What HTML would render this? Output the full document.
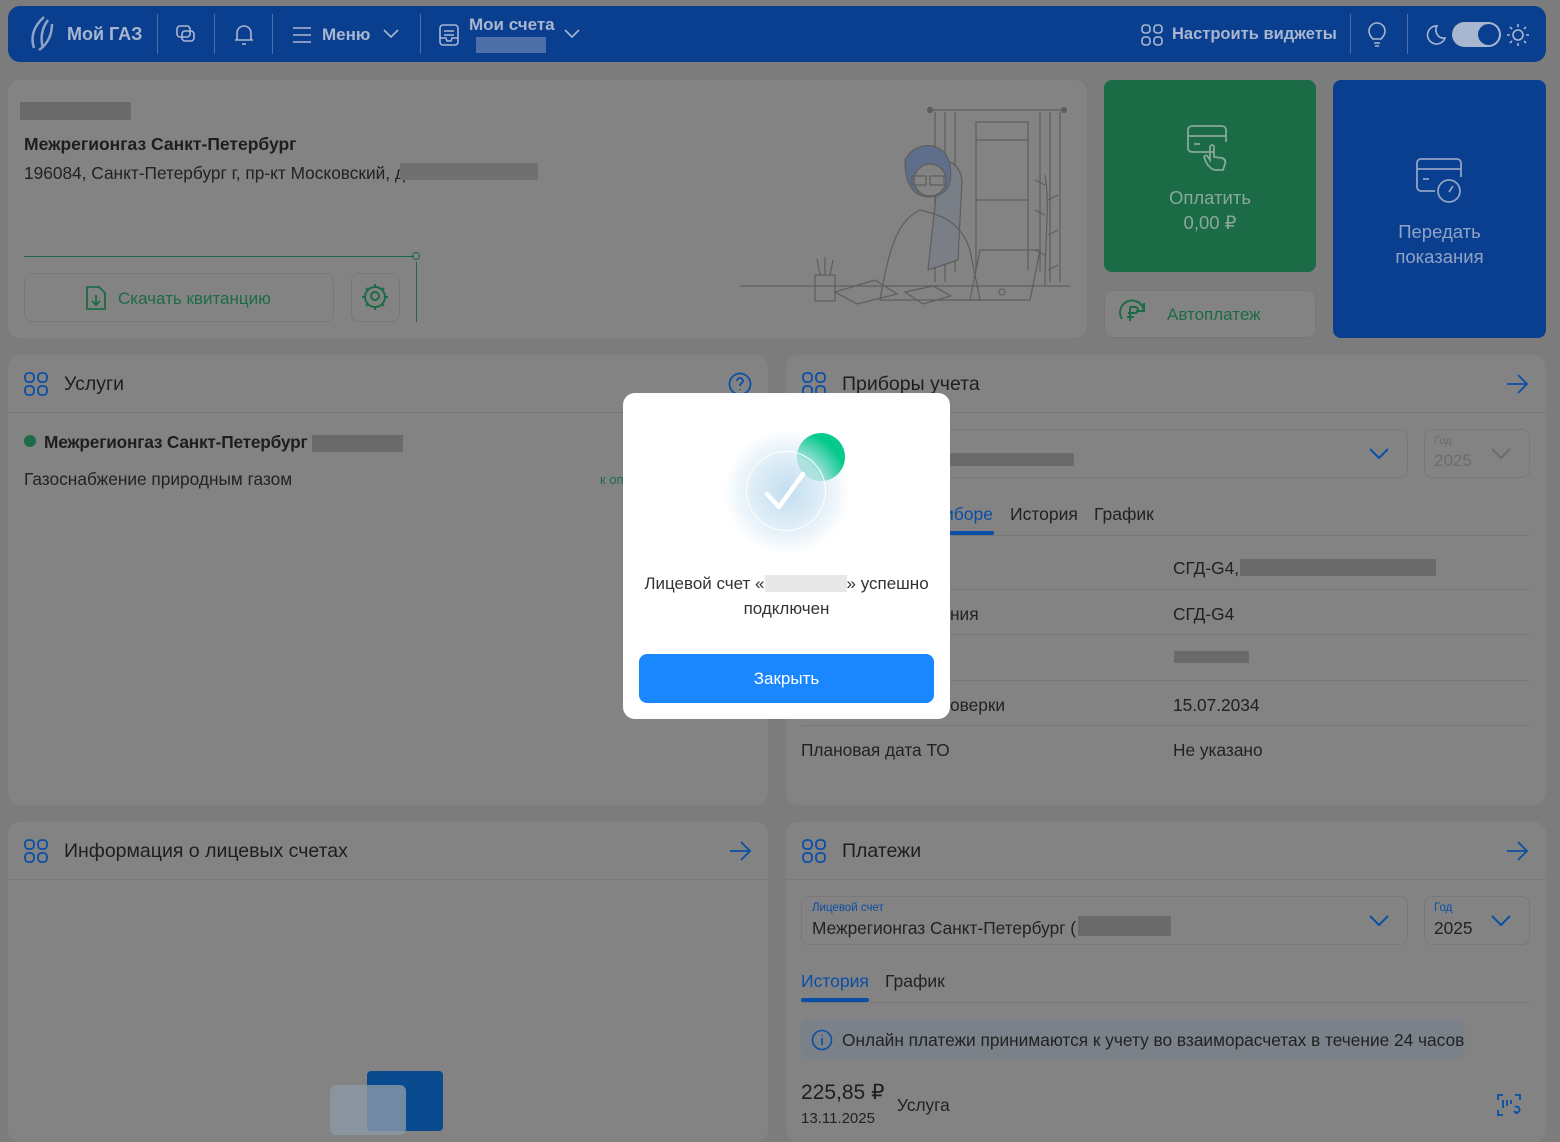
<!DOCTYPE html>
<html><head><meta charset="utf-8"><style>
*{box-sizing:border-box;margin:0;padding:0}
body{width:1560px;height:1123px;overflow:hidden;background:#7c7c7c;font-family:"Liberation Sans","Noto Sans CJK SC",sans-serif;color:#1e1e1e;position:relative}
.a{position:absolute}
.card{position:absolute;background:#838383;border-radius:12px}
.hd{position:absolute;left:0;right:0;top:0;height:58px;border-bottom:1px solid #787878}
.hd .t{position:absolute;left:56px;top:18px;font-size:19.5px;color:#1e1e1e}
.blur{position:absolute;background:#6a6a6a}
.blu{color:#0b4ea6}
.row{position:absolute;left:16px;right:16px;height:1px;background:#777}
.sel{position:absolute;border:1px solid #787878;border-radius:8px}
.txt{position:absolute;font-size:17.3px;color:#222}
</style></head><body>

<!-- header -->
<div class="a" style="left:8px;top:6px;width:1538px;height:56px;background:#0a3f8f;border-radius:12px"></div>
<svg class="a" style="left:24px;top:14px" width="36" height="40" viewBox="0 0 36 40"><path d="M20 3C10 12 6 22 10 34M24 6C18 14 16 24 19 34M28 10C28 20 24 30 15 36" stroke="#8fa3c6" stroke-width="2.5" fill="none"/></svg>
<div class="a" style="left:67px;top:24px;font-size:18px;font-weight:bold;color:#a9b6cf">Мой ГАЗ</div>
<div class="a" style="left:157px;top:14px;width:1px;height:40px;background:#4f6fa6"></div>
<svg class="a" style="left:174px;top:23px" width="24" height="24" viewBox="0 0 24 24" fill="none" stroke="#a9b6cf" stroke-width="1.6"><rect x="3" y="3" width="13" height="11" rx="3"/><rect x="8" y="8" width="12" height="10" rx="3"/></svg>
<div class="a" style="left:214px;top:14px;width:1px;height:40px;background:#4f6fa6"></div>
<svg class="a" style="left:232px;top:22px" width="24" height="26" viewBox="0 0 24 26" fill="none" stroke="#a9b6cf" stroke-width="1.6"><path d="M5 18V11a7 7 0 0114 0v7zM3 18h18M10 22h4"/></svg>
<div class="a" style="left:272px;top:14px;width:1px;height:40px;background:#4f6fa6"></div>
<svg class="a" style="left:291px;top:25px" width="22" height="20" viewBox="0 0 22 20" stroke="#a9b6cf" stroke-width="1.6"><path d="M2 3h18M2 10h18M2 17h18"/></svg>
<div class="a" style="left:322px;top:25px;font-size:17px;font-weight:bold;color:#a9b6cf">Меню</div>
<svg class="a" style="left:382px;top:28px" width="18" height="12" viewBox="0 0 18 12" fill="none" stroke="#a9b6cf" stroke-width="1.6"><path d="M2 2l7 7 7-7"/></svg>
<div class="a" style="left:420px;top:14px;width:1px;height:40px;background:#4f6fa6"></div>
<svg class="a" style="left:437px;top:23px" width="24" height="24" viewBox="0 0 24 24" fill="none" stroke="#a9b6cf" stroke-width="1.6"><rect x="3" y="2" width="18" height="20" rx="3"/><path d="M7 8h10M7 12h10M3 15h6l1 3h4l1-3h6"/></svg>
<div class="a" style="left:469px;top:15px;font-size:17px;font-weight:bold;color:#a9b6cf">Мои счета</div>
<div class="a" style="left:476px;top:37px;width:70px;height:16px;background:#4c6fa8"></div>
<svg class="a" style="left:563px;top:28px" width="18" height="12" viewBox="0 0 18 12" fill="none" stroke="#a9b6cf" stroke-width="1.6"><path d="M2 2l7 7 7-7"/></svg>
<svg class="a" style="left:1141px;top:24px" width="22" height="22" viewBox="0 0 22 22" fill="none" stroke="#a9b6cf" stroke-width="1.6"><rect x="1" y="1" width="8" height="8" rx="3"/><rect x="13" y="1" width="8" height="8" rx="3"/><rect x="1" y="13" width="8" height="8" rx="3"/><rect x="13" y="13" width="8" height="8" rx="3"/></svg>
<div class="a" style="left:1172px;top:25px;font-size:16.5px;font-weight:bold;color:#a9b6cf">Настроить виджеты</div>
<div class="a" style="left:1350px;top:14px;width:1px;height:40px;background:#4f6fa6"></div>
<svg class="a" style="left:1367px;top:22px" width="20" height="26" viewBox="0 0 20 26" fill="none" stroke="#a9b6cf" stroke-width="1.6"><path d="M6 17c-3-3-4-5-4-8a8 8 0 0116 0c0 3-1 5-4 8zM7 21h6M8 24h4"/></svg>
<div class="a" style="left:1407px;top:14px;width:1px;height:40px;background:#4f6fa6"></div>
<svg class="a" style="left:1423px;top:23px" width="24" height="24" viewBox="0 0 24 24" fill="none" stroke="#a9b6cf" stroke-width="1.6"><path d="M14 3a9 9 0 108 12A8 8 0 0114 3z"/></svg>
<div class="a" style="left:1452px;top:22px;width:49px;height:25px;border-radius:13px;background:#a9b6cf"></div>
<div class="a" style="left:1478px;top:24px;width:21px;height:21px;border-radius:50%;background:#0a3f8f"></div>
<svg class="a" style="left:1506px;top:23px" width="24" height="24" viewBox="0 0 24 24" fill="none" stroke="#a9b6cf" stroke-width="1.6"><circle cx="12" cy="12" r="5"/><path d="M12 1v3M12 20v3M1 12h3M20 12h3M4 4l2 2M18 18l2 2M4 20l2-2M18 6l2-2"/></svg>

<!-- top card -->
<div class="card" style="left:8px;top:80px;width:1079px;height:258px"></div>
<div class="blur" style="left:20px;top:102px;width:111px;height:18px"></div>
<div class="a" style="left:24px;top:134px;font-size:17.5px;font-weight:bold;color:#1e1e1e">Межрегионгаз Санкт-Петербург</div>
<div class="a" style="left:24px;top:163px;font-size:17.3px;color:#222">196084, Санкт-Петербург г, пр-кт Московский, д</div>
<div class="blur" style="left:400px;top:163px;width:138px;height:17px;background:#707070"></div>
<div class="a" style="left:24px;top:256px;width:390px;height:1px;background:#1d6b46"></div>
<div class="a" style="left:412px;top:252px;width:8px;height:8px;border:1.5px solid #1d6b46;border-radius:50%"></div>
<div class="a" style="left:416px;top:262px;width:1px;height:60px;background:#1d6b46"></div>
<div class="a" style="left:24px;top:273px;width:310px;height:49px;border:1px solid #787878;border-radius:8px"></div>
<svg class="a" style="left:84px;top:284px" width="24" height="28" viewBox="0 0 24 28" fill="none" stroke="#1d6b46" stroke-width="1.8"><path d="M3 3h12l6 6v16H3zM12 11v10M8 17l4 4 4-4"/></svg>
<div class="a" style="left:118px;top:289px;font-size:17px;color:#1d6b46">Скачать квитанцию</div>
<div class="a" style="left:351px;top:273px;width:49px;height:49px;border:1px solid #787878;border-radius:8px"></div>
<svg class="a" style="left:360px;top:282px" width="30" height="30" viewBox="0 0 30 30" fill="none" stroke="#1d6b46" stroke-width="2"><circle cx="15" cy="15" r="10"/><circle cx="15" cy="14" r="4"/><path d="M15 2v3M15 25v3M2 15h3M25 15h3M6 6l2 2M22 22l2 2M6 24l2-2M22 8l2-2"/></svg>
<!-- illustration -->
<svg class="a" style="left:740px;top:100px" width="340" height="220" viewBox="0 0 340 220" fill="none" stroke="#5e5e5e" stroke-width="1.2">
<path d="M190 10h134"/><circle cx="190" cy="10" r="2.5" fill="#5e5e5e"/><circle cx="324" cy="10" r="2.5" fill="#5e5e5e"/>
<path d="M195 12v170M205 12v170M215 12v160M300 12v160M310 12v170M320 12v170"/>
<rect x="236" y="22" width="52" height="18"/><path d="M236 40v130M288 40v130M236 100h52"/>
<path d="M0 186h330"/>
<path d="M200 60c10 0 20 5 22 20l-4 80-30 10z" fill="#7a7e86"/>
<path d="M165 60c10-20 40-20 45 5 3 20-3 30-20 32-15 0-25-10-25-37z" fill="#5f6e8a"/>
<circle cx="190" cy="80" r="16" fill="#838383"/>
<rect x="172" y="76" width="14" height="9"/><rect x="190" y="76" width="14" height="9"/>
<path d="M140 200c10-60 20-80 40-90 20 5 40 10 50 40l10 50z"/>
<path d="M95 192l40-12 22 14-40 10zM165 192l28-6 18 10-28 8z"/>
<path d="M240 150h60l-10 50h-60zM215 200h75"/>
<circle cx="262" cy="192" r="3"/>
<rect x="75" y="175" width="20" height="26"/><path d="M80 175l-3-16M85 175v-18M90 175l3-15"/>
<path d="M305 185c0-50 5-80 0-110M295 80l10 5M318 95l-10 5M295 110l10 5M318 130l-10 5M295 150l10 5M318 165l-10 5"/>
</svg>

<!-- pay tile -->
<div class="a" style="left:1104px;top:80px;width:212px;height:192px;background:#1b6b47;border-radius:8px"></div>
<svg class="a" style="left:1186px;top:122px" width="48" height="52" viewBox="0 0 48 52" fill="none" stroke="#8aa898" stroke-width="1.8"><path d="M28 30H6a4 4 0 01-4-4V8a4 4 0 014-4h30a4 4 0 014 4v12M2 14h38M8 22h6"/><path d="M30 48c-4 0-8-4-10-8l-2-5c1-2 3-2 4 0l2 3V25a2 2 0 014 0v10l8 1c3 1 4 3 3 6l-2 6z"/></svg>
<div class="a" style="left:1104px;top:187px;width:212px;text-align:center;font-size:18.5px;color:#8aa898">Оплатить</div>
<div class="a" style="left:1104px;top:212px;width:212px;text-align:center;font-size:18.5px;color:#8aa898">0,00 ₽</div>
<div class="a" style="left:1104px;top:290px;width:212px;height:48px;background:#838383;border:1px solid #787878;border-radius:8px"></div>
<svg class="a" style="left:1118px;top:299px" width="30" height="30" viewBox="0 0 30 30" fill="none" stroke="#1d6b46" stroke-width="2"><path d="M26 12A12 12 0 104 20M26 4v8h-8"/><path d="M12 8v14M12 8h5a3 3 0 010 6h-7M9 18h7"/></svg>
<div class="a" style="left:1167px;top:305px;font-size:17px;color:#1d6b46">Автоплатеж</div>

<!-- readings tile -->
<div class="a" style="left:1333px;top:80px;width:213px;height:258px;background:#0a3f8f;border-radius:8px"></div>
<svg class="a" style="left:1415px;top:155px" width="50" height="52" viewBox="0 0 50 52" fill="none" stroke="#8fa3c6" stroke-width="1.8"><path d="M20 36H6a4 4 0 01-4-4V8a4 4 0 014-4h36a4 4 0 014 4v14M2 14h44M8 24h6"/><circle cx="34" cy="36" r="11"/><path d="M34 37l4-6"/></svg>
<div class="a" style="left:1333px;top:219px;width:213px;text-align:center;font-size:18.5px;color:#8fa3c6;line-height:25px">Передать<br>показания</div>

<!-- services -->
<div class="card" style="left:8px;top:355px;width:760px;height:450px">
<div class="hd"><div class="t">Услуги</div></div>
</div>
<svg class="a" style="left:24px;top:372px" width="24" height="24" viewBox="0 0 24 24" fill="none" stroke="#0b4ea6" stroke-width="1.8"><rect x="1" y="1" width="9" height="9" rx="3.5"/><rect x="14" y="1" width="9" height="9" rx="3.5"/><rect x="1" y="14" width="9" height="9" rx="3.5"/><rect x="14" y="14" width="9" height="9" rx="3.5"/></svg>
<svg class="a" style="left:728px;top:372px" width="24" height="24" viewBox="0 0 24 24" fill="none" stroke="#0b4ea6" stroke-width="1.8"><circle cx="12" cy="12" r="10.5"/><path d="M9 9a3 3 0 116 0c0 2-3 2-3 5M12 17v1"/></svg>
<div class="a" style="left:24px;top:435px;width:12px;height:12px;border-radius:50%;background:#1d6b46"></div>
<div class="a" style="left:44px;top:432px;font-size:17.3px;font-weight:bold;letter-spacing:-0.2px">Межрегионгаз Санкт-Петербург (</div>
<div class="blur" style="left:312px;top:435px;width:91px;height:17px"></div>
<div class="txt" style="left:24px;top:469px">Газоснабжение природным газом</div>
<div class="a" style="left:600px;top:472px;font-size:13px;color:#1d6b46">к оп</div>

<!-- devices -->
<div class="card" style="left:786px;top:355px;width:760px;height:450px">
<div class="hd"><div class="t">Приборы учета</div></div>
</div>
<svg class="a" style="left:802px;top:372px" width="24" height="24" viewBox="0 0 24 24" fill="none" stroke="#0b4ea6" stroke-width="1.8"><rect x="1" y="1" width="9" height="9" rx="3.5"/><rect x="14" y="1" width="9" height="9" rx="3.5"/><rect x="1" y="14" width="9" height="9" rx="3.5"/><rect x="14" y="14" width="9" height="9" rx="3.5"/></svg>
<svg class="a" style="left:1505px;top:373px" width="24" height="22" viewBox="0 0 24 22" fill="none" stroke="#0b4ea6" stroke-width="1.8"><path d="M2 11h20M13 2l9 9-9 9"/></svg>
<div class="sel" style="left:801px;top:429px;width:607px;height:49px"></div>
<div class="blur" style="left:950px;top:453px;width:124px;height:13px"></div>
<svg class="a" style="left:1368px;top:447px" width="22" height="14" viewBox="0 0 22 14" fill="none" stroke="#0b4ea6" stroke-width="2"><path d="M2 2l9 9 9-9"/></svg>
<div class="sel" style="left:1424px;top:429px;width:106px;height:49px"></div>
<div class="a" style="left:1434px;top:435px;font-size:11px;color:#6c6c6c">Год</div>
<div class="a" style="left:1434px;top:451px;font-size:17px;color:#6c6c6c">2025</div>
<svg class="a" style="left:1490px;top:447px" width="22" height="14" viewBox="0 0 22 14" fill="none" stroke="#6c6c6c" stroke-width="2"><path d="M2 2l9 9 9-9"/></svg>
<div class="a blu" style="left:944px;top:504px;font-size:17.5px">ибор­е</div>
<div class="a" style="left:940px;top:531px;width:54px;height:4px;background:#0b4ea6;border-radius:2px"></div>
<div class="txt" style="left:1010px;top:504px;font-size:17.5px">История</div>
<div class="txt" style="left:1094px;top:504px;font-size:17.5px">График</div>
<div class="row" style="left:801px;width:729px;top:535px"></div>
<div class="txt" style="left:1173px;top:558px">СГД-G4,</div>
<div class="blur" style="left:1240px;top:559px;width:196px;height:17px"></div>
<div class="row" style="left:801px;width:729px;top:589px"></div>
<div class="txt" style="left:950px;top:604px">ния</div>
<div class="txt" style="left:1173px;top:604px">СГД-G4</div>
<div class="row" style="left:801px;width:729px;top:634px"></div>
<div class="blur" style="left:1174px;top:651px;width:75px;height:12px"></div>
<div class="row" style="left:801px;width:729px;top:680px"></div>
<div class="txt" style="left:950px;top:695px">оверки</div>
<div class="txt" style="left:1173px;top:695px">15.07.2034</div>
<div class="row" style="left:801px;width:729px;top:725px"></div>
<div class="txt" style="left:801px;top:740px">Плановая дата ТО</div>
<div class="txt" style="left:1173px;top:740px">Не указано</div>

<!-- info accounts -->
<div class="card" style="left:8px;top:822px;width:760px;height:320px">
<div class="hd"><div class="t">Информация о лицевых счетах</div></div>
</div>
<svg class="a" style="left:24px;top:839px" width="24" height="24" viewBox="0 0 24 24" fill="none" stroke="#0b4ea6" stroke-width="1.8"><rect x="1" y="1" width="9" height="9" rx="3.5"/><rect x="14" y="1" width="9" height="9" rx="3.5"/><rect x="1" y="14" width="9" height="9" rx="3.5"/><rect x="14" y="14" width="9" height="9" rx="3.5"/></svg>
<svg class="a" style="left:728px;top:840px" width="24" height="22" viewBox="0 0 24 22" fill="none" stroke="#0b4ea6" stroke-width="1.8"><path d="M2 11h20M13 2l9 9-9 9"/></svg>
<div class="a" style="left:367px;top:1071px;width:76px;height:60px;background:#0a4a8f;border-radius:4px"></div>
<div class="a" style="left:330px;top:1085px;width:76px;height:50px;background:#8b99a6;border-radius:6px;opacity:.8"></div>

<!-- payments -->
<div class="card" style="left:786px;top:822px;width:760px;height:320px">
<div class="hd"><div class="t">Платежи</div></div>
</div>
<svg class="a" style="left:802px;top:839px" width="24" height="24" viewBox="0 0 24 24" fill="none" stroke="#0b4ea6" stroke-width="1.8"><rect x="1" y="1" width="9" height="9" rx="3.5"/><rect x="14" y="1" width="9" height="9" rx="3.5"/><rect x="1" y="14" width="9" height="9" rx="3.5"/><rect x="14" y="14" width="9" height="9" rx="3.5"/></svg>
<svg class="a" style="left:1505px;top:840px" width="24" height="22" viewBox="0 0 24 22" fill="none" stroke="#0b4ea6" stroke-width="1.8"><path d="M2 11h20M13 2l9 9-9 9"/></svg>
<div class="sel" style="left:801px;top:896px;width:607px;height:49px"></div>
<div class="a blu" style="left:812px;top:902px;font-size:11.5px">Лицевой счет</div>
<div class="txt" style="left:812px;top:918px;font-size:17.3px">Межрегионгаз Санкт-Петербург (</div>
<div class="blur" style="left:1078px;top:916px;width:93px;height:20px"></div>
<svg class="a" style="left:1368px;top:914px" width="22" height="14" viewBox="0 0 22 14" fill="none" stroke="#0b4ea6" stroke-width="2"><path d="M2 2l9 9 9-9"/></svg>
<div class="sel" style="left:1424px;top:896px;width:106px;height:49px"></div>
<div class="a blu" style="left:1434px;top:902px;font-size:11.5px">Год</div>
<div class="txt" style="left:1434px;top:918px;font-size:17.3px">2025</div>
<svg class="a" style="left:1490px;top:914px" width="22" height="14" viewBox="0 0 22 14" fill="none" stroke="#0b4ea6" stroke-width="2"><path d="M2 2l9 9 9-9"/></svg>
<div class="a blu" style="left:801px;top:971px;font-size:17.5px">История</div>
<div class="a" style="left:801px;top:998px;width:68px;height:4px;background:#0b4ea6;border-radius:2px"></div>
<div class="txt" style="left:885px;top:971px;font-size:17.5px">График</div>
<div class="row" style="left:801px;width:729px;top:1002px"></div>
<div class="a" style="left:801px;top:1019px;width:664px;height:40px;background:#7b8188;border-radius:8px"></div>
<svg class="a" style="left:811px;top:1029px" width="22" height="22" viewBox="0 0 22 22" fill="none" stroke="#0b4ea6" stroke-width="1.6"><circle cx="11" cy="11" r="9.5"/><path d="M11 9v7M11 6v1"/></svg>
<div class="txt" style="left:842px;top:1030px;font-size:17.3px">Онлайн платежи принимаются к учету во взаиморасчетах в течение 24 часов</div>
<div class="a" style="left:801px;top:1080px;font-size:21px;color:#1e1e1e">225,85 ₽</div>
<div class="txt" style="left:897px;top:1095px">Услуга</div>
<div class="txt" style="left:801px;top:1110px;font-size:15px">13.11.2025</div>
<svg class="a" style="left:1496px;top:1093px" width="26" height="24" viewBox="0 0 26 24" fill="none" stroke="#0b4ea6" stroke-width="1.8"><path d="M2 7V2h5M24 7V2h-5M2 17v5h5M7 7v8M11 7v6M15 7v4M19 14a3 3 0 11-1 4l3 3"/></svg>

<!-- modal -->
<div class="a" style="left:623px;top:393px;width:327px;height:326px;background:#fff;border-radius:12px"></div>
<div class="a" style="left:797px;top:433px;width:48px;height:48px;border-radius:50%;background:#06c98c"></div>
<div class="a" style="left:725px;top:430px;width:124px;height:124px;border-radius:50%;background:radial-gradient(circle,rgba(190,220,238,.95) 0%,rgba(215,233,245,.8) 40%,rgba(255,255,255,0) 72%)"></div>
<div class="a" style="left:746px;top:451px;width:80px;height:80px;border-radius:50%;border:1.5px solid rgba(255,255,255,.95)"></div>
<svg class="a" style="left:763px;top:470px" width="46" height="44" viewBox="0 0 46 44" fill="none" stroke="#fff" stroke-width="4.5" stroke-linecap="round" stroke-linejoin="round"><path d="M4 24l12 13L40 4"/></svg>
<div class="a" style="left:623px;top:571px;width:327px;text-align:center;font-size:17px;line-height:25px;color:#333">Лицевой счет «<span style="display:inline-block;width:82px;height:17px;background:#e8e8e8;vertical-align:-3px"></span>» успешно<br>подключен</div>
<div class="a" style="left:639px;top:654px;width:295px;height:49px;background:#1a87ff;border-radius:8px;color:#fff;font-size:17px;text-align:center;line-height:49px">Закрыть</div>
</body></html>
